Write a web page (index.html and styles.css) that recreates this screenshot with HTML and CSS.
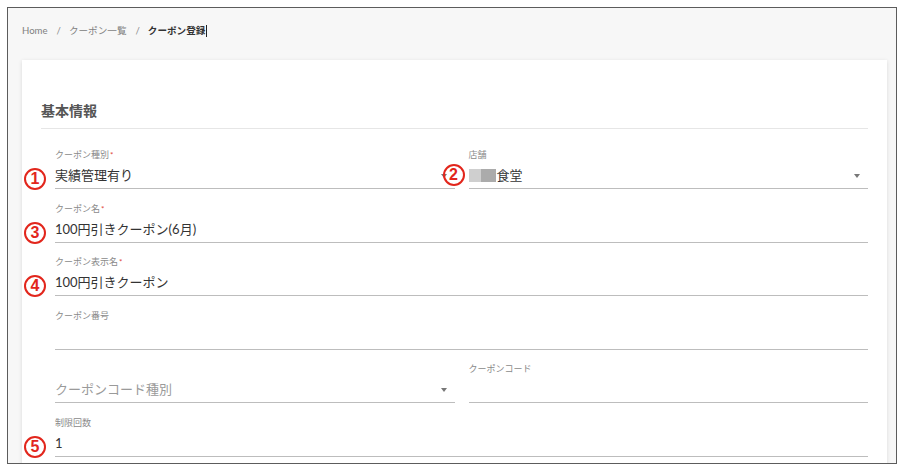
FILE: index.html
```html
<!DOCTYPE html>
<html lang="ja">
<head>
<meta charset="utf-8">
<title>クーポン登録</title>
<link rel="stylesheet" href="styles.css">
</head>
<body>
<div class="frame">
  <nav class="crumbs">
    <span class="crumb">Home</span><span class="sep">/</span><span class="crumb">クーポン一覧</span><span class="sep">/</span><span class="crumb current">クーポン登録</span><span class="caret"></span>
  </nav>
  <section class="card">
    <h2 class="heading">基本情報</h2>
    <div class="form">
      <div class="row">
        <div class="field">
          <div class="label">クーポン種別<span class="req">*</span></div>
          <div class="input select">実績管理有り<span class="arrow"></span></div>
          <span class="marker">1</span>
        </div>
        <div class="field">
          <div class="label">店舗</div>
          <div class="input select"><span class="blur blur-a"></span><span class="blur blur-b"></span>食堂<span class="arrow"></span></div>
          <span class="marker marker-right">2</span>
        </div>
      </div>
      <div class="field">
        <div class="label">クーポン名<span class="req">*</span></div>
        <div class="input">100円引きクーポン(6月)</div>
        <span class="marker">3</span>
      </div>
      <div class="field">
        <div class="label">クーポン表示名<span class="req">*</span></div>
        <div class="input">100円引きクーポン</div>
        <span class="marker">4</span>
      </div>
      <div class="field">
        <div class="label">クーポン番号</div>
        <div class="input"></div>
      </div>
      <div class="row">
        <div class="field">
          <div class="label"></div>
          <div class="input select placeholder">クーポンコード種別<span class="arrow"></span></div>
        </div>
        <div class="field">
          <div class="label">クーポンコード</div>
          <div class="input"></div>
        </div>
      </div>
      <div class="field">
        <div class="label">制限回数</div>
        <div class="input">1</div>
        <span class="marker">5</span>
      </div>
    </div>
  </section>
</div>
</body>
</html>
```
FILE: styles.css
```css
html, body {
  margin: 0;
  background: #ffffff;
}
body {
  padding: 7px;
  font-family: "Lato", "Noto Sans CJK JP", sans-serif;
}
.frame {
  box-sizing: border-box;
  width: 890px;
  height: 457px;
  border: 1px solid #5c5c5c;
  background: #f7f7f7;
  overflow: hidden;
}
.crumbs {
  padding: 16px 14px 0;
  height: 14px;
  line-height: 14px;
  font-size: 9.6px;
  color: #808080;
  display: flex;
  align-items: center;
}
.sep {
  margin: 0 8px 0 9px;
  color: #888;
}
.current {
  color: #333;
  font-weight: 700;
}
.caret {
  display: inline-block;
  width: 1px;
  height: 12px;
  background: #222;
  margin-left: 1px;
}
.card {
  margin: 22px 9px 0 14px;
  background: #ffffff;
  box-shadow: 0 1px 4px rgba(0, 0, 0, 0.12);
  padding: 41px 19px 40px;
}
.heading {
  margin: 0;
  font-size: 14px;
  line-height: 20px;
  font-weight: 700;
  color: #555;
  padding-bottom: 7px;
  border-bottom: 1px solid #e6e6e6;
}
.form {
  padding: 20px 0 0 14px;
  display: flex;
  flex-direction: column;
  gap: 13.6px;
}
.row {
  display: grid;
  grid-template-columns: 1fr 1fr;
  gap: 14px;
}
.field {
  position: relative;
}
.label {
  height: 12px;
  line-height: 12px;
  font-size: 9px;
  color: #8a8a8a;
  margin-bottom: 4px;
  white-space: nowrap;
}
.req {
  color: #e0453a;
  font-size: 8px;
  vertical-align: top;
  margin-left: 1px;
}
.input {
  position: relative;
  height: 20px;
  line-height: 20px;
  padding-bottom: 3px;
  border-bottom: 1px solid #bdbdbd;
  font-size: 13px;
  color: #333;
  display: flex;
  align-items: center;
  white-space: nowrap;
}
.placeholder {
  color: #9a9a9a;
}
.arrow {
  position: absolute;
  right: 8px;
  top: 9px;
  width: 0;
  height: 0;
  border-left: 3.5px solid transparent;
  border-right: 3.5px solid transparent;
  border-top: 4px solid #777;
}
.blur {
  display: inline-block;
  height: 13px;
}
.blur-a {
  width: 12px;
  background: #cfcfcf;
}
.blur-b {
  width: 15px;
  background: #ababab;
  margin-right: 1px;
}
.marker {
  position: absolute;
  left: -31px;
  top: 19px;
  box-sizing: border-box;
  width: 22px;
  height: 22px;
  border: 2px solid #e2261c;
  border-radius: 50%;
  color: #e2261c;
  font-family: "Liberation Sans", "DejaVu Sans", sans-serif;
  font-weight: 700;
  font-size: 16px;
  line-height: 18px;
  text-align: center;
  background: transparent;
}
.marker-right {
  left: -26px;
  top: 15px;
}
```
